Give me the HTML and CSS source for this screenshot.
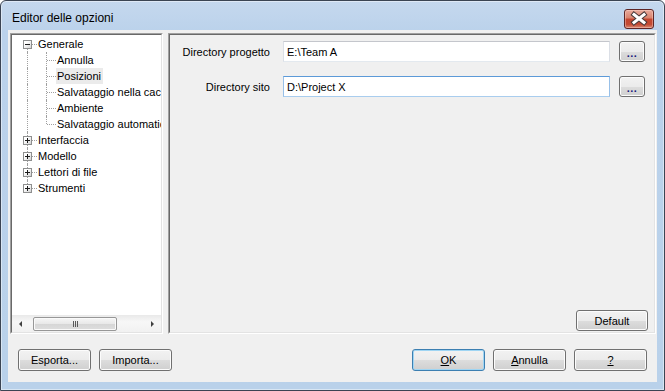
FILE: index.html
```html
<!DOCTYPE html>
<html lang="it">
<head>
    <meta charset="UTF-8">
    <title>Editor delle opzioni</title>
    <link rel="stylesheet" href="styles.css">
</head>
<body>
    <div class="window">
        <div class="titlebar">
            <span class="title">Editor delle opzioni</span>
            <button class="close">
                <svg width="28" height="18" viewBox="0 0 28 18">
                    <path d="M9 4.5 L19 12.5 M19 4.5 L9 12.5" stroke="#4a3a3a" stroke-width="5" stroke-linecap="square"/>
                    <path d="M9 4.5 L19 12.5 M19 4.5 L9 12.5" stroke="#ffffff" stroke-width="3" stroke-linecap="square"/>
                </svg>
            </button>
        </div>
        <div class="client">
            <div class="main">
                <div class="tree">
                    <div class="tree-body">
                        <div class="tree-items">
                            <div class="node">
                                <span class="ind bottom elbow"><span class="box minus"></span></span>
                                <span class="label">Generale</span>
                            </div>
                            <div class="node">
                                <span class="ind"></span><span class="ind elbow"></span>
                                <span class="label">Annulla</span>
                            </div>
                            <div class="node">
                                <span class="ind"></span><span class="ind elbow"></span>
                                <span class="label selected">Posizioni</span>
                            </div>
                            <div class="node">
                                <span class="ind"></span><span class="ind elbow"></span>
                                <span class="label">Salvataggio nella cache</span>
                            </div>
                            <div class="node">
                                <span class="ind"></span><span class="ind elbow"></span>
                                <span class="label">Ambiente</span>
                            </div>
                            <div class="node">
                                <span class="ind"></span><span class="ind top elbow"></span>
                                <span class="label">Salvataggio automatico</span>
                            </div>
                            <div class="node">
                                <span class="ind elbow"><span class="box plus"></span></span>
                                <span class="label">Interfaccia</span>
                            </div>
                            <div class="node">
                                <span class="ind elbow"><span class="box plus"></span></span>
                                <span class="label">Modello</span>
                            </div>
                            <div class="node">
                                <span class="ind elbow"><span class="box plus"></span></span>
                                <span class="label">Lettori di file</span>
                            </div>
                            <div class="node">
                                <span class="ind top elbow"><span class="box plus"></span></span>
                                <span class="label">Strumenti</span>
                            </div>
                        </div>
                        <div class="hscroll">
                            <span class="arrow"><span class="tri-left"></span></span>
                            <span class="track">
                                <span class="thumb"><span class="grip"></span></span>
                            </span>
                            <span class="arrow"><span class="tri-right"></span></span>
                        </div>
                    </div>
                </div>
                <div class="panel">
                    <div class="panel-body">
                        <div class="field">
                            <label>Directory progetto</label>
                            <input type="text" value="E:\Team A">
                            <button class="btn browse">...</button>
                        </div>
                        <div class="field">
                            <label>Directory sito</label>
                            <input type="text" class="focused" value="D:\Project X">
                            <button class="btn browse">...</button>
                        </div>
                        <div class="panel-foot">
                            <button class="btn">Default</button>
                        </div>
                    </div>
                </div>
            </div>
            <div class="footer">
                <div class="group">
                    <button class="btn wide">Esporta...</button>
                    <button class="btn wide">Importa...</button>
                </div>
                <div class="group">
                    <button class="btn wide default"><u>O</u>K</button>
                    <button class="btn wide"><u>A</u>nnulla</button>
                    <button class="btn wide"><u>?</u></button>
                </div>
            </div>
        </div>
    </div>
</body>
</html>
```

FILE: styles.css
```css
body {
    margin: 0;
    font-family: "Liberation Sans", Arial, sans-serif;
    font-size: 11px;
    color: #000;
}
.window {
    width: 665px;
    height: 391px;
    box-sizing: border-box;
    border: 1px solid #3b4453;
    border-radius: 6px 6px 0 0;
    background: linear-gradient(#c5d8ee, #bbd2eb 30px, #b9d1ea);
    box-shadow: inset 0 0 0 1px rgba(255, 255, 255, 0.45);
    display: flex;
    flex-direction: column;
}
.titlebar {
    height: 29px;
    display: flex;
    align-items: flex-start;
    padding: 0 10px 0 11px;
}
.title {
    font-size: 12px;
    line-height: 16px;
    margin-top: 9px;
}
.close {
    margin-left: auto;
    margin-top: 8px;
    width: 30px;
    height: 20px;
    padding: 0;
    border: 1px solid #5e2626;
    border-radius: 3px;
    background: linear-gradient(#e9aa9c 0%, #d8826d 45%, #c4452f 50%, #c34b34 80%, #d98a74 100%);
    box-shadow: inset 0 0 0 1px rgba(255, 220, 210, 0.4);
    display: flex;
    align-items: center;
    justify-content: center;
}
.client {
    flex: 1;
    margin: 0 7px 8px 7px;
    background: #f0f0f0;
    display: flex;
    flex-direction: column;
}
.main {
    display: flex;
    gap: 5px;
    height: 301px;
    margin-top: 3px;
    padding: 0 1px 0 2px;
}

/* sunken edges */
.tree, .panel {
    box-sizing: border-box;
    border: 1px solid;
    border-color: #a0a0a0 #ffffff #ffffff #a0a0a0;
    display: flex;
}
.tree-body, .panel-body {
    flex: 1;
    border: 1px solid;
    border-color: #696969 #e3e3e3 #e3e3e3 #696969;
    display: flex;
    flex-direction: column;
    min-width: 0;
}
.tree {
    width: 153px;
    flex: none;
}
.tree-body {
    background: #fff;
}
.panel {
    flex: 1;
}

/* tree */
.tree-items {
    flex: 1;
    overflow: hidden;
    padding-top: 1px;
}
.node {
    display: flex;
    height: 16px;
    padding-left: 6px;
}
.ind {
    position: relative;
    width: 19px;
    flex: none;
}
.ind::before {
    content: '';
    position: absolute;
    left: 9px;
    top: 0;
    bottom: 0;
    border-left: 1px dotted #a0a0a0;
}
.ind.top::before {
    bottom: 8px;
}
.ind.bottom::before {
    top: 8px;
}
.ind.elbow::after {
    content: '';
    position: absolute;
    left: 10px;
    right: 0;
    top: 8px;
    border-top: 1px dotted #a0a0a0;
}
.box {
    position: absolute;
    left: 5px;
    top: 4px;
    width: 9px;
    height: 9px;
    box-sizing: border-box;
    border: 1px solid #8e8f8f;
    background: linear-gradient(135deg, #ffffff 30%, #d4d4d4);
    z-index: 1;
}
.box::before {
    content: '';
    position: absolute;
    left: 1px;
    top: 3px;
    width: 5px;
    height: 1px;
    background: #1c1c1c;
}
.box.plus::after {
    content: '';
    position: absolute;
    left: 3px;
    top: 1px;
    width: 1px;
    height: 5px;
    background: #1c1c1c;
}
.label {
    padding: 0 2px 0 1px;
    line-height: 16px;
    white-space: nowrap;
}
.label.selected {
    background: #ebebeb;
}

/* scrollbar */
.hscroll {
    height: 17px;
    flex: none;
    display: flex;
    background: linear-gradient(#e9e9e9, #f7f7f7 40%, #f1f1f1);
}
.arrow {
    width: 17px;
    display: flex;
    align-items: center;
    justify-content: center;
}
.tri-left, .tri-right {
    width: 0;
    height: 0;
    border-top: 3px solid transparent;
    border-bottom: 3px solid transparent;
}
.tri-left {
    border-right: 3px solid #404040;
}
.tri-right {
    border-left: 3px solid #404040;
}
.track {
    flex: 1;
    display: flex;
    align-items: center;
    padding-left: 4px;
}
.thumb {
    width: 84px;
    height: 14px;
    box-sizing: border-box;
    border: 1px solid #979797;
    border-radius: 2px;
    background: linear-gradient(#f6f6f6, #e8e8e8 50%, #d6d6d6 51%, #dedede);
    box-shadow: inset 0 0 0 1px #fafafa;
    display: flex;
    align-items: center;
    justify-content: center;
}
.grip {
    width: 5px;
    height: 6px;
    background: repeating-linear-gradient(90deg, #5a5a5a 0 1px, transparent 1px 2px);
}

/* right panel */
.panel-body {
    padding: 6px 6px 1px 0;
}
.field {
    display: flex;
    align-items: center;
    height: 21px;
    margin-bottom: 14px;
}
.field label {
    width: 100px;
    text-align: right;
    margin-right: 13px;
}
.field input {
    width: 327px;
    height: 21px;
    box-sizing: border-box;
    margin: 0 9px 0 0;
    padding: 0 3px;
    border: 1px solid;
    border-color: #c4c6cc #dbdfe6 #e3e9ef #dbdfe6;
    font-family: "Liberation Sans", Arial, sans-serif;
    font-size: 11px;
    color: #000;
    background: #fff;
    outline: none;
}
.field input.focused {
    border-color: #5c9ad8 #98c0e8 #a9cdee #98c0e8;
}
.panel-foot {
    margin-top: auto;
    display: flex;
    justify-content: flex-end;
}

/* buttons */
.btn {
    height: 21px;
    width: 72px;
    padding: 0;
    border: 1px solid #707070;
    border-radius: 3px;
    background: linear-gradient(#f2f2f2 0%, #ebebeb 50%, #dddddd 51%, #cfcfcf 100%);
    box-shadow: inset 0 0 0 1px #fcfcfc;
    font-family: "Liberation Sans", Arial, sans-serif;
    font-size: 11px;
    color: #000;
}
.btn.browse {
    width: 26px;
    color: #1a1a80;
    font-weight: bold;
    letter-spacing: 0.5px;
    padding-top: 3px;
}
.btn.wide {
    width: 73px;
    height: 22px;
}
.btn.default {
    border-color: #3c7fb1;
    box-shadow: inset 0 0 0 1px #9fd5f3;
}
.footer {
    display: flex;
    justify-content: space-between;
    margin-top: 15px;
    padding: 0 10px;
}
.group {
    display: flex;
    gap: 8px;
}
```
